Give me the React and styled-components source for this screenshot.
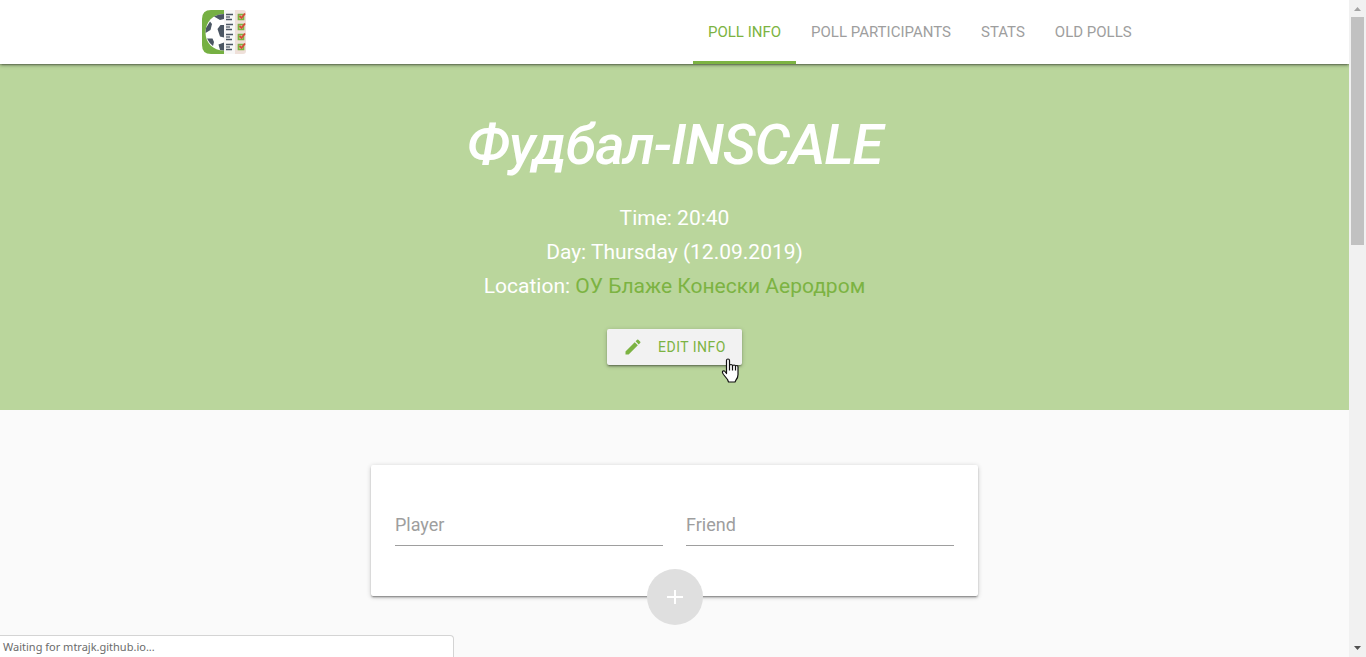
import React from "react";
import styled, { createGlobalStyle } from "styled-components";

const green = "#7cb342";
const liftShadow =
  "0 2px 2px 0 rgba(0,0,0,0.14), 0 3px 1px -2px rgba(0,0,0,0.12), 0 1px 5px 0 rgba(0,0,0,0.2)";

const GlobalStyle = createGlobalStyle`
  *, *::before, *::after { box-sizing: border-box; }
  body {
    margin: 0;
    background: #fafafa;
    color: #fff;
    font-family: Roboto, "Liberation Sans", sans-serif;
    font-size: 15px;
  }
`;

const Shell = styled.div`
  display: flex;
  height: 100vh;
  overflow: hidden;
`;

const Page = styled.div`
  flex: 1;
  min-width: 0;
  overflow: hidden;
`;

const Header = styled.header`
  position: relative;
  background: #fff;
  box-shadow: ${liftShadow}, 0 1px 1px 0 rgba(0, 0, 0, 0.12);
`;

const HeaderInner = styled.div`
  width: 70%;
  height: 64px;
  margin: 0 auto;
  display: flex;
  justify-content: space-between;
  align-items: center;
`;

const LogoLink = styled.a`
  display: block;
  height: 44px;
`;

const NavList = styled.nav`
  display: flex;
  height: 100%;
`;

const NavLink = styled.a`
  padding: 0 15px;
  line-height: 64px;
  color: ${(p) => (p.$active ? green : "#9e9e9e")};
  box-shadow: ${(p) => (p.$active ? `inset 0 -3px 0 ${green}` : "none")};
  text-decoration: none;
  text-transform: uppercase;
`;

const Hero = styled.section`
  display: flex;
  flex-direction: column;
  align-items: center;
  padding: 49px 16px 45px;
  background: #bad69c;
`;

const Title = styled.h1`
  margin: 0 0 24px;
  font-size: 56px;
  line-height: 64px;
  font-style: italic;
  font-weight: 500;
  letter-spacing: -1px;
`;

const Detail = styled.p`
  margin: 0;
  font-size: 21px;
  line-height: 34px;
`;

const PlaceLink = styled.a`
  color: ${green};
  text-decoration: none;
`;

const EditWrap = styled.div`
  position: relative;
  margin-top: 26px;
`;

const EditButton = styled.button`
  display: flex;
  align-items: center;
  gap: 15px;
  height: 36px;
  padding: 0 16px;
  border: 0;
  border-radius: 2px;
  background: #f2f2f2;
  color: ${green};
  font: 14px Roboto, sans-serif;
  letter-spacing: 0.5px;
  text-transform: uppercase;
  cursor: pointer;
  box-shadow: ${liftShadow}, 0 1px 1px 0 rgba(0, 0, 0, 0.12);
`;

const Pointer = styled.svg`
  position: absolute;
  right: 3px;
  top: 29px;
  pointer-events: none;
`;

const Card = styled.form`
  position: relative;
  display: grid;
  grid-template-columns: 1fr 1fr;
  gap: 23px;
  width: 45%;
  margin: 55px auto 0;
  padding: 38px 24px 50px;
  border-radius: 2px;
  background: #fff;
  box-shadow: ${liftShadow}, 0 1px 1px 0 rgba(0, 0, 0, 0.12);
`;

const Field = styled.input`
  width: 100%;
  min-width: 0;
  height: 43px;
  padding: 0;
  border: 0;
  border-bottom: 1px solid #9e9e9e;
  border-radius: 0;
  background: transparent;
  color: #212121;
  font: 18px Roboto, sans-serif;
  outline: 0;
  &::placeholder {
    color: #9e9e9e;
    opacity: 1;
  }
`;

const AddButton = styled.button`
  position: absolute;
  left: 50%;
  bottom: -29px;
  margin-left: -27px;
  display: grid;
  place-items: center;
  width: 56px;
  height: 56px;
  padding: 0;
  border: 0;
  border-radius: 50%;
  background: #dfdfdf;
  color: #fff;
`;

const ScrollTrack = styled.div`
  display: flex;
  flex-direction: column;
  align-items: center;
  width: 17px;
  background: #f1f1f1;
`;

const ScrollArrow = styled.svg`
  flex: none;
  margin-top: ${(p) => (p.$end ? "auto" : "0")};
`;

const ScrollThumb = styled.div`
  width: 13px;
  height: calc(35% - 2px);
  background: #c1c1c1;
`;

const StatusBubble = styled.div`
  position: fixed;
  left: 0;
  bottom: 0;
  width: 454px;
  max-width: 100%;
  height: 22px;
  padding-left: 3px;
  border: 1px solid #d4d4d4;
  border-width: 1px 1px 0 0;
  border-radius: 0 4px 0 0;
  background: #fff;
  color: #6b6b6b;
  font: 11px/22px "Noto Sans", "Open Sans", sans-serif;
`;

function Logo() {
  const rows = [3, 13, 23, 33];
  return (
    <svg width="44" height="44" viewBox="0 0 44 44" aria-hidden="true">
      <path d="M22 0H9Q0 0 0 9v26q0 9 9 9h13z" fill="#76b043" />
      <path d="M22 4C11 4 3.500 12 3.500 22.500S11 40.500 22 40.500z" fill="#fff" />
      <path
        d="M12 6.500 17 4.500l5-.5v5l-4 1zM4 18l4-6.500 2 2.500-1.500 6L3.500 23zM15.500 19l3-4H22v12.500l-4-1zM5 28.500h5.500l1.500 3.500-1 4q-4-3-6-7.500zM16.500 34.500 22 32.500v8l-4-.5z"
        fill="#4b5663"
      />
      <path d="M22 0h11v44H22z" fill="#f7f7f7" />
      <path d="M33 0h8q3 0 3 3v38q0 3-3 3h-8z" fill="#efe0d9" />
      {rows.map((y) => (
        <g key={y}>
          <path d={`M24 ${y + 1.5}h7M24 ${y + 6.5}h6`} stroke="#4b5663" strokeWidth="1.6" />
          <path d={`M24 ${y + 4}h4`} stroke="#4b5663" strokeWidth="1.2" />
          <path d={`M36.500 ${y + 1.5}h5v5h-5z`} fill="#c9d9a5" stroke="#7cb342" strokeWidth="1.7" />
          <path d={`M37.500 ${y + 3}l2 2L43 ${y + 0.5}`} fill="none" stroke="#d94a3a" strokeWidth="1.8" />
        </g>
      ))}
    </svg>
  );
}

function PencilIcon() {
  return (
    <svg width="20" height="20" viewBox="0 0 24 24" fill="currentColor" aria-hidden="true">
      <path d="M3 17.250V21h3.750L17.810 9.940l-3.750-3.750L3 17.250zM20.710 7.040a1 1 0 0 0 0-1.410l-2.340-2.340a1 1 0 0 0-1.410 0l-1.830 1.830 3.750 3.750 1.830-1.830z" />
    </svg>
  );
}

function PlusIcon() {
  return (
    <svg width="26" height="26" viewBox="0 0 26 26" aria-hidden="true">
      <path d="M5 13h16M13 6v14" stroke="currentColor" strokeWidth="2" />
    </svg>
  );
}

function HandPointer() {
  return (
    <Pointer width="18" height="25" viewBox="0 0 18 25" aria-hidden="true">
      <path
        d="M5.500 15.500V2.500q0-1.500 1.500-1.500t1.500 1.500v5q0-1 1.500-1t1.500 1.500q0-1 1.500-1t1.500 1.500q0-1 1.250-1T17 9v7.500q0 3.500-2 5.500l-1 2H7.500l-1-2.500-4-5q-1.500-2-1-3t2-.5l2 2.500z"
        fill="#fff"
        stroke="#111"
        strokeWidth="1.200"
        strokeLinejoin="round"
      />
      <path d="M8.500 7.500v5M11.500 8v4.500M14.500 9v3.500" stroke="#111" strokeWidth="1.200" />
    </Pointer>
  );
}

const links = ["Poll info", "Poll participants", "Stats", "Old polls"];

export default function App() {
  return (
    <Shell>
      <GlobalStyle />
      <Page>
        <Header>
          <HeaderInner>
            <LogoLink href="#" aria-label="Home">
              <Logo />
            </LogoLink>
            <NavList>
              {links.map((label, i) => (
                <NavLink key={label} href="#" $active={i === 0}>
                  {label}
                </NavLink>
              ))}
            </NavList>
          </HeaderInner>
        </Header>
        <main>
          <Hero>
            <Title>Фудбал-INSCALE</Title>
            <Detail>Time: 20:40</Detail>
            <Detail>Day: Thursday (12.09.2019)</Detail>
            <Detail>
              Location: <PlaceLink href="#">ОУ Блаже Конески Аеродром</PlaceLink>
            </Detail>
            <EditWrap>
              <EditButton type="button">
                <PencilIcon />
                Edit info
              </EditButton>
              <HandPointer />
            </EditWrap>
          </Hero>
          <Card>
            <Field placeholder="Player" aria-label="Player" />
            <Field placeholder="Friend" aria-label="Friend" />
            <AddButton type="button" aria-label="Add player">
              <PlusIcon />
            </AddButton>
          </Card>
        </main>
      </Page>
      <ScrollTrack aria-hidden="true">
        <ScrollArrow width="17" height="17" viewBox="0 0 17 17">
          <path d="M5 11h7L8.500 7z" fill="#a3a3a3" />
        </ScrollArrow>
        <ScrollThumb />
        <ScrollArrow $end width="17" height="17" viewBox="0 0 17 17">
          <path d="M5 6h7l-3.500 4z" fill="#505050" />
        </ScrollArrow>
      </ScrollTrack>
      <StatusBubble role="status">Waiting for mtrajk.github.io...</StatusBubble>
    </Shell>
  );
}
